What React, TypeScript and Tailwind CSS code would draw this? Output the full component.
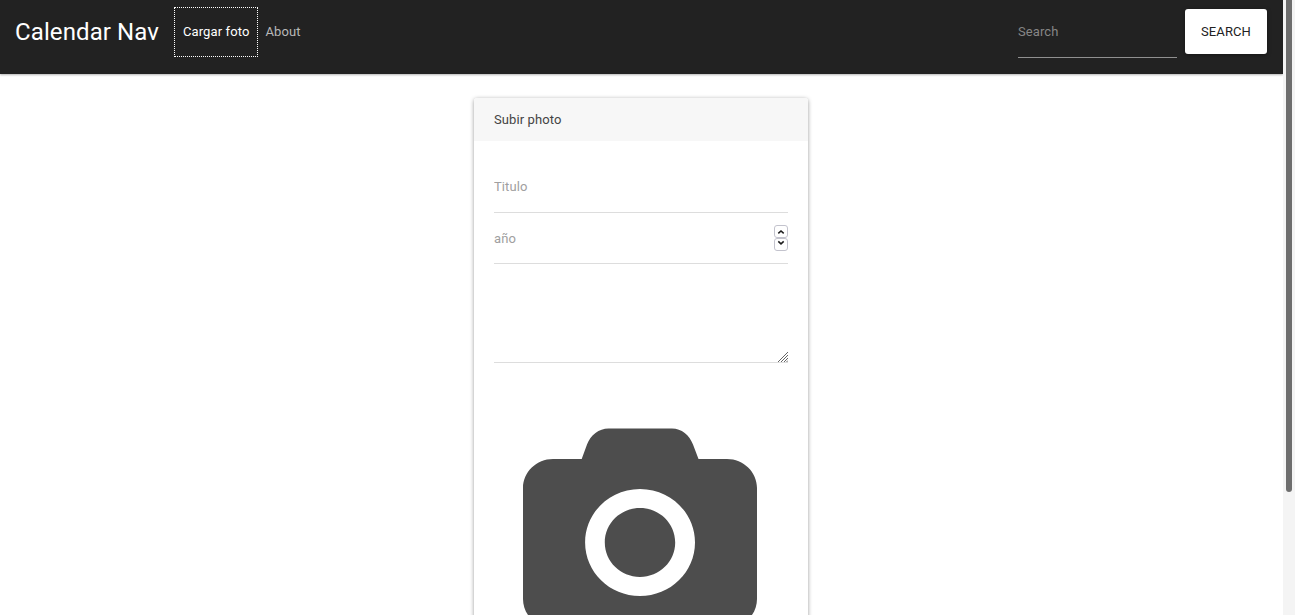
import React from "react";

function Navbar() {
  return (
    <nav className="relative flex h-[74px] shrink-0 items-start bg-[#222] pr-4 pl-[15px] shadow-[0_1px_2px_rgba(0,0,0,0.3)]">
      <a className="mt-[14px] w-[159px] text-[24px] leading-9 whitespace-nowrap text-white">Calendar Nav</a>
      <a className="mt-[7px] flex h-[50px] w-[84px] items-center border border-dotted border-white pl-2 text-white">
        Cargar foto
      </a>
      <a className="mt-[7px] ml-[7.5px] flex h-[50px] items-center text-[#b8b8b8]">About</a>
      <input
        className="mt-[6px] ml-auto h-[52px] w-[159px] border-b border-[#909090] bg-transparent tracking-[0.1px] text-white outline-none placeholder:text-[#868686]"
        placeholder="Search"
      />
      <button className="mt-[9px] ml-2 h-[45px] w-[82px] rounded-[3px] bg-white tracking-[0.1px] text-[#222] uppercase shadow-[0_1px_4px_rgba(0,0,0,0.4)]">
        Search
      </button>
    </nav>
  );
}

function Stepper() {
  return (
    <svg className="mt-[-1px] h-[28px] w-[14px] shrink-0" viewBox="0 0 14 28" fill="none">
      <rect x="0.5" y="1.5" width="13" height="12" rx="2.5" fill="#fff" stroke="#c3c3cd" />
      <rect x="0.5" y="14.5" width="13" height="12" rx="2.5" fill="#fff" stroke="#c3c3cd" />
      <path d="M4.3 9.4 7 6.9 9.700 9.400M4.300 17.400 7 19.900 9.700 17.400" stroke="#1c1c1c" strokeWidth="1.5" />
    </svg>
  );
}

function Camera() {
  return (
    <svg className="mt-[52px] block h-[240px] w-[294px] shrink-0" viewBox="0 0 294 240">
      <path
        fill="#4d4d4d"
        fillRule="evenodd"
        d="M59 44H87.7L93 29.5C96.5 20 105 13.4 114.5 13.4H178C187.500 13.400 195.500 20 199 29.500L204.500 44H233C249.500 44 263 57 263 73V184C263 200 249.500 213 233 213H59C42.500 213 29 200 29 184V73C29 57 42.500 44 59 44ZM146 74C115.600 74 91.100 97.900 91.100 127.500S115.600 181 146 181 201 157.100 201 127.500 176.400 74 146 74ZM146 93.100C165.500 93.100 181.200 108.500 181.200 127.500S165.500 161.900 146 161.900 110.800 146.500 110.800 127.500 126.500 93.100 146 93.100Z"
      />
    </svg>
  );
}

function UploadCard() {
  return (
    <section className="w-[334px] rounded-[3px] bg-white shadow-[0_1px_4px_rgba(0,0,0,0.4)]">
      <header className="flex h-[43px] items-center rounded-t-[3px] bg-[#f7f7f7] px-5 text-[#444]">Subir photo</header>
      <form className="px-5 pt-5">
        <input
          className="block h-[52px] w-full border-b border-[#ddd] tracking-[0.1px] outline-none placeholder:text-[#a0a0a0]"
          placeholder="Titulo"
        />
        <div className="flex h-[51px] w-full items-center border-b border-[#ddd]">
          <input
            className="min-w-0 flex-1 bg-transparent pt-[2px] tracking-[0.1px] outline-none placeholder:text-[#a0a0a0]"
            placeholder="año"
          />
          <Stepper />
        </div>
        <div className="flex h-[99px] items-end border-b border-[#ddd]">
          <textarea className="h-full min-w-0 flex-1 resize-none outline-none" />
          <svg className="h-[10px] w-[10px]" viewBox="0 0 10 10" stroke="#555" strokeWidth="0.9">
            <path d="M0 10 10 0M3 10 10 3M6 10 10 6M8.500 10 10 8.500" />
          </svg>
        </div>
        <Camera />
      </form>
    </section>
  );
}

export default function App() {
  return (
    <div className="flex h-[615px] w-full overflow-hidden bg-white font-['Roboto',sans-serif] text-[13px] tracking-[0.1px]">
      <main className="flex min-w-0 flex-1 flex-col overflow-hidden">
        <Navbar />
        <div className="flex justify-center pt-6 pr-px">
          <UploadCard />
        </div>
      </main>
      <aside className="w-3 shrink-0 bg-[#f4f4f4] px-[3px]">
        <div className="h-[492px] rounded-b-[3px] bg-[#6e6e6e]" />
      </aside>
    </div>
  );
}
